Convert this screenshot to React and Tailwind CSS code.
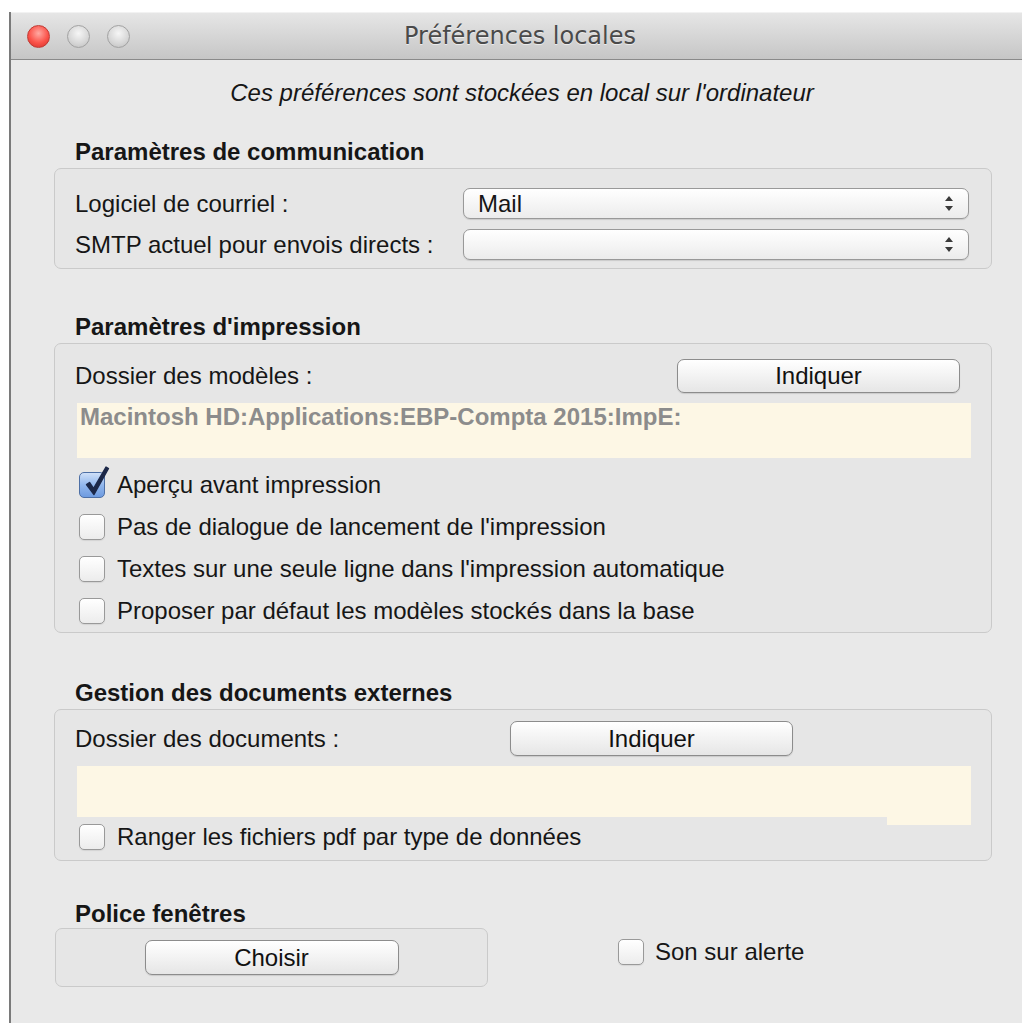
// Local preferences dialog (Mac-style window)

function TrafficLights() {
  return (
    <div className="flex items-center gap-[17px] pl-[16px]">
      <span className="w-[23px] h-[23px] rounded-full border border-[#c03a33] bg-[radial-gradient(circle_at_50%_35%,#ffaaa3,#fb534a_55%,#d3302a)]" />
      <span className="w-[23px] h-[23px] rounded-full border border-[#a2a2a2] bg-[radial-gradient(circle_at_50%_35%,#f6f6f6,#d6d6d6_60%,#bcbcbc)]" />
      <span className="w-[23px] h-[23px] rounded-full border border-[#a2a2a2] bg-[radial-gradient(circle_at_50%_35%,#f6f6f6,#d6d6d6_60%,#bcbcbc)]" />
    </div>
  );
}

function GroupTitle({ children, className = '' }) {
  return (
    <h2 className={`pl-[21px] h-[28px] leading-[28px] font-bold ${className}`}>
      {children}
    </h2>
  );
}

function GroupBox({ children, className = '' }) {
  return (
    <div className={`rounded-[7px] border border-[#cacaca] bg-[#e6e6e6] ${className}`}>
      {children}
    </div>
  );
}

function MacButton({ label, className = '' }) {
  return (
    <button
      className={`rounded-[7px] border border-[#8c8c8c] bg-linear-to-b from-white to-[#e6e6e6] shadow-[0_1px_1px_rgba(0,0,0,0.12)] leading-none text-[#111] ${className}`}
    >
      {label}
    </button>
  );
}

function PopUp({ value }) {
  return (
    <div className="flex items-center w-[506px] h-[31px] pl-[14px] pr-[15px] rounded-[7px] border border-[#999] bg-linear-to-b from-white to-[#ececec] shadow-[0_1px_1px_rgba(0,0,0,0.12)]">
      <span className="flex-1 leading-none">{value}</span>
      <svg width="8" height="15" viewBox="0 0 8 15">
        <path d="M4 0 L8 5 L0 5 Z M0 10 L8 10 L4 15 Z" fill="#3a3a3a" />
      </svg>
    </div>
  );
}

function CheckBox({ checked = false }) {
  if (checked) {
    return (
      <span className="relative w-[26px] h-[26px] shrink-0 rounded-[5px] border border-[#4d6fa5] bg-linear-to-b from-[#cfe0f8] via-[#92b7ec] to-[#6e9be0]">
        {/* tick mark, drawn past the top-right corner */}
        <svg
          className="absolute left-[0px] top-[-9px]"
          width="34"
          height="36"
          viewBox="0 0 34 36"
        >
          <path
            d="M6.5 20.5 L14 30.5 L28.5 4.5 L26 3 L13.5 24.5 L9.5 18.5 Z"
            fill="#1c2848"
            stroke="#1c2848"
            strokeWidth="1.4"
            strokeLinejoin="round"
          />
        </svg>
      </span>
    );
  }

  return (
    <span className="w-[26px] h-[26px] shrink-0 rounded-[5px] border border-[#999] bg-linear-to-b from-white to-[#ececec] shadow-[0_1px_1px_rgba(0,0,0,0.08)]" />
  );
}

function CheckRow({ label, checked, className = '' }) {
  return (
    <div className={`flex items-center gap-[12px] pl-[4px] ${className}`}>
      <CheckBox checked={checked} />
      <span>{label}</span>
    </div>
  );
}

export default function App() {
  return (
    <div className="h-[1023px] w-full overflow-hidden bg-white pt-[12px] pl-[9px] font-['Liberation_Sans',Arial,sans-serif] text-[24px] text-[#161616]">
      <div className="w-[1024px] h-[1011px] border-l-2 border-[#7a7a7a] bg-[#e9e9e9]">
        {/* Title bar */}
        <div className="grid grid-cols-[1fr_auto_1fr] items-center h-[48px] border-t border-[#f2f2f2] border-b border-b-[#8a8a8a] bg-linear-to-b from-[#e6e6e6] to-[#c6c6c6]">
          <TrafficLights />
          <span className="pr-[4px] font-['DejaVu_Sans',sans-serif] text-[24px] text-[#4a4a4a] [text-shadow:0_1px_0_rgba(255,255,255,0.6)]">
            Préférences locales
          </span>
          <span />
        </div>

        <p className="mt-[19px] h-[28px] leading-[28px] text-center italic">
          Ces préférences sont stockées en local sur l'ordinateur
        </p>

        <div className="pl-[43px]">
          {/* Communication */}
          <GroupTitle className="mt-[31px]">Paramètres de communication</GroupTitle>
          <GroupBox className="mt-[2px] w-[938px] h-[101px] pt-[19px] pl-[20px]">
            <div className="flex items-center h-[31px]">
              <span className="w-[388px]">Logiciel de courriel :</span>
              <PopUp value="Mail" />
            </div>
            <div className="mt-[10px] flex items-center h-[31px]">
              <span className="w-[388px]">SMTP actuel pour envois directs :</span>
              <PopUp value="" />
            </div>
          </GroupBox>

          {/* Printing */}
          <GroupTitle className="mt-[44px]">Paramètres d'impression</GroupTitle>
          <GroupBox className="mt-[2px] w-[938px] h-[290px] pt-[15px] pl-[20px]">
            <div className="flex items-center h-[34px]">
              <span className="w-[602px]">Dossier des modèles :</span>
              <MacButton label="Indiquer" className="w-[283px] h-[34px]" />
            </div>
            <div className="mt-[10px] ml-[2px] w-[894px] h-[55px] pl-[3px] bg-[#fdf7e5] leading-[28px] font-bold text-[#8c8c8c]">
              Macintosh HD:Applications:EBP-Compta 2015:ImpE:
            </div>
            <div className="mt-[6px]">
              <CheckRow checked label="Aperçu avant impression" className="h-[42px]" />
              <CheckRow label="Pas de dialogue de lancement de l'impression" className="h-[42px]" />
              <CheckRow label="Textes sur une seule ligne dans l'impression automatique" className="h-[42px]" />
              <CheckRow label="Proposer par défaut les modèles stockés dans la base" className="h-[42px]" />
            </div>
          </GroupBox>

          {/* External documents */}
          <GroupTitle className="mt-[46px]">Gestion des documents externes</GroupTitle>
          <GroupBox className="mt-[2px] w-[938px] h-[152px] pt-[11px] pl-[20px]">
            <div className="flex items-center h-[35px]">
              <span className="w-[435px]">Dossier des documents :</span>
              <MacButton label="Indiquer" className="w-[283px] h-[35px]" />
            </div>
            <div className="relative mt-[10px] ml-[2px] w-[894px] h-[51px] bg-[#fdf7e5]">
              <span className="absolute top-full right-0 w-[84px] h-[8px] bg-[#fdf7e5]" />
            </div>
            <CheckRow label="Ranger les fichiers pdf par type de données" className="h-[40px]" />
          </GroupBox>

          {/* Window font */}
          <GroupTitle className="mt-[39px]">Police fenêtres</GroupTitle>
          <div className="flex items-start">
            <GroupBox className="ml-[1px] w-[433px] h-[59px] flex items-center justify-center">
              <MacButton label="Choisir" className="w-[254px] h-[35px]" />
            </GroupBox>
            <div className="ml-[130px] mt-[6px] flex items-center gap-[11px]">
              <CheckBox />
              <span>Son sur alerte</span>
            </div>
          </div>
        </div>
      </div>
    </div>
  );
}
